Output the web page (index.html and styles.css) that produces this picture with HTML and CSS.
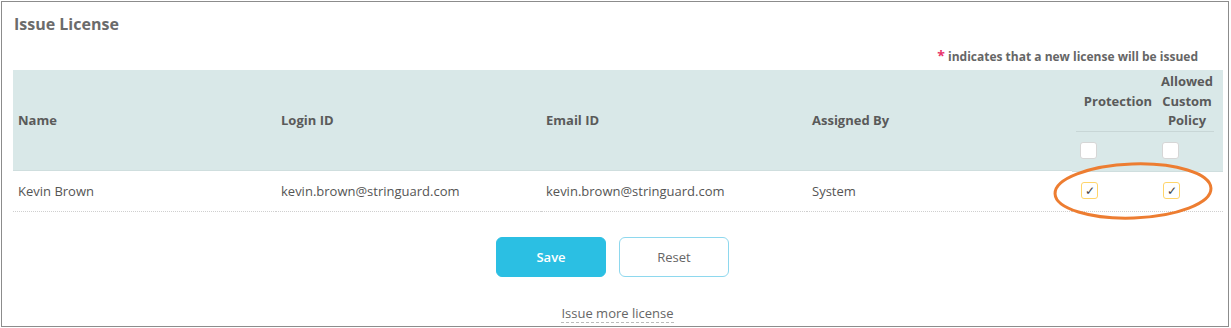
FILE: index.html
```html
<!DOCTYPE html>
<html lang="en">
<head>
    <meta charset="UTF-8">
    <title>Issue License</title>
    <link rel="stylesheet" href="styles.css">
</head>
<body>
    <div class="frame">
        <h2 class="title">Issue License</h2>
        <p class="note"><span class="star">*</span> indicates that a new license will be issued</p>

        <div class="grid">
            <div class="th">Name</div>
            <div class="th">Login ID</div>
            <div class="th">Email ID</div>
            <div class="th">Assigned By</div>
            <div class="th th-opts">
                <div class="opt-labels">
                    <div class="opt-label opt-prot">Protection</div>
                    <div class="opt-label opt-pol">Allowed Custom Policy</div>
                </div>
                <div class="opt-boxes">
                    <span class="box"></span>
                    <span class="box"></span>
                </div>
            </div>

            <div class="td">Kevin Brown</div>
            <div class="td">kevin.brown@stringuard.com</div>
            <div class="td">kevin.brown@stringuard.com</div>
            <div class="td">System</div>
            <div class="td td-opts">
                <span class="box checked">&#10003;</span>
                <span class="box checked">&#10003;</span>
            </div>
        </div>

        <div class="actions">
            <button class="btn btn-save">Save</button>
            <button class="btn btn-reset">Reset</button>
        </div>
        <div class="more"><a href="#">Issue more license</a></div>

        <svg class="mark" width="170" height="64" viewBox="0 0 170 64">
            <ellipse cx="83" cy="32" rx="78" ry="27" fill="none" stroke="#ed7d31" stroke-width="3" transform="rotate(-2 83 32)"/>
        </svg>
    </div>
</body>
</html>
```

FILE: styles.css
```css
body {
    margin: 0;
    padding: 1px 2px 0 1px;
    font-family: "Open Sans", Arial, sans-serif;
    color: #555;
    background: #fff;
}
.frame {
    position: relative;
    height: 324px;
    border: 1px solid #8c8c8c;
    padding: 0 6px 0 11px;
    overflow: hidden;
}
.title {
    margin: 0;
    padding: 11px 0 0 1px;
    font-size: 16px;
    font-weight: 700;
    color: #6b6b6b;
    line-height: 22px;
}
.note {
    margin: 0;
    padding: 12px 24px 0 0;
    text-align: right;
    font-size: 12px;
    font-weight: 700;
    color: #666;
    line-height: 18px;
    height: 23px;
}
.star {
    color: #e8336b;
    font-size: 14px;
}
.grid {
    display: grid;
    grid-template-columns: 263px 265px 266px 265px 1fr;
}
.th {
    background-color: #d9e8e8;
    font-size: 13px;
    font-weight: 700;
    color: #5a5a5a;
    padding: 0 5px;
    height: 100px;
    border-bottom: 1px solid #cfdede;
    display: flex;
    align-items: center;
}
.th-opts {
    display: block;
    padding: 2px 9px 0 4px;
    height: 99px;
}
.opt-labels {
    display: flex;
    align-items: center;
    border-bottom: 1px solid #c8d6d6;
    line-height: 19.5px;
    height: 59px;
}
.opt-label {
    text-align: center;
}
.opt-prot {
    width: 84px;
}
.opt-pol {
    width: 54px;
}
.opt-boxes {
    display: flex;
    padding: 10px 0 0 4px;
    gap: 65px;
}
.box {
    display: inline-block;
    box-sizing: border-box;
    width: 17px;
    height: 17px;
    border: 1px solid #d6d6d6;
    border-radius: 3px;
    background: #fff;
    font-size: 12px;
    line-height: 15px;
    text-align: center;
    color: #444;
}
.box.checked {
    border-color: #ffd56a;
}
.td {
    font-size: 13px;
    color: #555;
    padding: 0 5px 2px;
    height: 37px;
    border-bottom: 1px dotted #cfcfcf;
    display: flex;
    align-items: center;
}
.td-opts {
    padding-left: 9px;
    gap: 65px;
}
.actions {
    display: flex;
    justify-content: center;
    gap: 13px;
    margin-top: 25px;
    padding-right: 10px;
}
.btn {
    width: 110px;
    height: 40px;
    border-radius: 6px;
    font-family: "Open Sans", Arial, sans-serif;
    font-size: 13px;
    cursor: pointer;
}
.btn-save {
    background-color: #2bbfe3;
    border: 1px solid #2bbfe3;
    color: #fff;
    font-weight: 600;
}
.btn-reset {
    background-color: #fff;
    border: 1px solid #8ed8ee;
    color: #666;
}
.more {
    text-align: center;
    margin-top: 27px;
    font-size: 13px;
}
.more a {
    color: #666;
    text-decoration: none;
    border-bottom: 1px dashed #bbb;
}
.mark {
    position: absolute;
    left: 1048px;
    top: 157px;
}
```
